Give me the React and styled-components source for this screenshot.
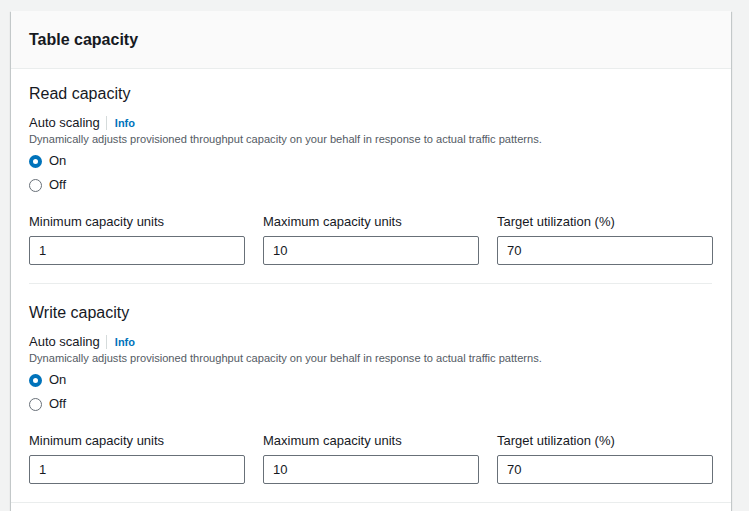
import React from 'react';
import styled, { createGlobalStyle } from 'styled-components';

const GlobalStyle = createGlobalStyle`
  body {
    margin: 0;
    background-color: #f2f3f3;
    font-family: "Liberation Sans", Arial, sans-serif;
    color: #16191f;
  }
`;

const Page = styled.div`
  padding: 11px 17px 0 11px;
  height: 511px;
  box-sizing: border-box;
  overflow: hidden;
`;

const Card = styled.div`
  background-color: #fff;
  box-shadow: 0 1px 1px 0 rgba(0, 28, 36, 0.3), 1px 1px 1px 0 rgba(0, 28, 36, 0.15),
    -1px 1px 1px 0 rgba(0, 28, 36, 0.15);
  width: 720px;
`;

const Header = styled.div`
  background-color: #fafafa;
  border-bottom: 1px solid #eaeded;
  height: 57px;
  display: flex;
  align-items: center;
  padding-left: 18px;
`;

const Title = styled.h2`
  margin: 0;
  font-size: 16px;
  font-weight: 700;
  line-height: 20px;
`;

const Section = styled.div`
  padding: 0 19px 0 18px;
  border-bottom: ${p => (p.last ? 'none' : '1px solid #eaeded')};
  min-height: ${p => (p.last ? '40px' : '0')};
`;

const Group = styled.div`
  padding: 18px 0 18px;
  border-bottom: ${p => (p.divider ? '1px solid #eaeded' : 'none')};

  &:first-child {
    padding-top: 14px;
  }
`;

const Heading = styled.h3`
  margin: 0 0 9px;
  font-size: 16px;
  font-weight: 400;
  line-height: 22px;
`;

const LabelRow = styled.div`
  display: flex;
  align-items: center;
  font-size: 13px;
  line-height: 18px;
`;

const Divider = styled.span`
  width: 1px;
  height: 14px;
  background-color: #d5dbdb;
  margin: 0 8px 0 6px;
`;

const InfoLink = styled.a`
  color: #0073bb;
  font-size: 11px;
  font-weight: 700;
`;

const Description = styled.div`
  font-size: 11.1px;
  line-height: 14px;
  color: #545b64;
  margin-bottom: 6px;
`;

const RadioList = styled.div`
  display: flex;
  flex-direction: column;
  gap: 6px;
  margin-bottom: 20px;
`;

const RadioRow = styled.label`
  display: flex;
  align-items: center;
  gap: 7px;
  font-size: 13px;
  line-height: 18px;
`;

const RadioDot = styled.span`
  width: 13px;
  height: 13px;
  border-radius: 50%;
  box-sizing: border-box;
  border: ${p => (p.checked ? '4px solid #0073bb' : '1.5px solid #687078')};
  background-color: #fff;
`;

const Fields = styled.div`
  display: grid;
  grid-template-columns: repeat(3, 216px);
  column-gap: 18px;
`;

const Field = styled.div`
  display: flex;
  flex-direction: column;
  gap: 6px;
`;

const FieldLabel = styled.span`
  font-size: 13px;
  line-height: 16px;
`;

const Input = styled.div`
  height: 29px;
  box-sizing: border-box;
  border: 1px solid #687078;
  border-radius: 2px;
  display: flex;
  align-items: center;
  padding-left: 9px;
  font-size: 13px;
`;

const Capacity = ({ title, divider }) => (
  <Group divider={divider}>
    <Heading>{title}</Heading>
    <LabelRow>
      Auto scaling
      <Divider />
      <InfoLink>Info</InfoLink>
    </LabelRow>
    <Description>
      Dynamically adjusts provisioned throughput capacity on your behalf in response to actual
      traffic patterns.
    </Description>
    <RadioList>
      <RadioRow>
        <RadioDot checked />
        On
      </RadioRow>
      <RadioRow>
        <RadioDot />
        Off
      </RadioRow>
    </RadioList>
    <Fields>
      <Field>
        <FieldLabel>Minimum capacity units</FieldLabel>
        <Input>1</Input>
      </Field>
      <Field>
        <FieldLabel>Maximum capacity units</FieldLabel>
        <Input>10</Input>
      </Field>
      <Field>
        <FieldLabel>Target utilization (%)</FieldLabel>
        <Input>70</Input>
      </Field>
    </Fields>
  </Group>
);

export default function App() {
  return (
    <Page>
      <GlobalStyle />
      <Card>
        <Header>
          <Title>Table capacity</Title>
        </Header>
        <Section>
          <Capacity title="Read capacity" divider />
          <Capacity title="Write capacity" />
        </Section>
        <Section last />
      </Card>
    </Page>
  );
}
